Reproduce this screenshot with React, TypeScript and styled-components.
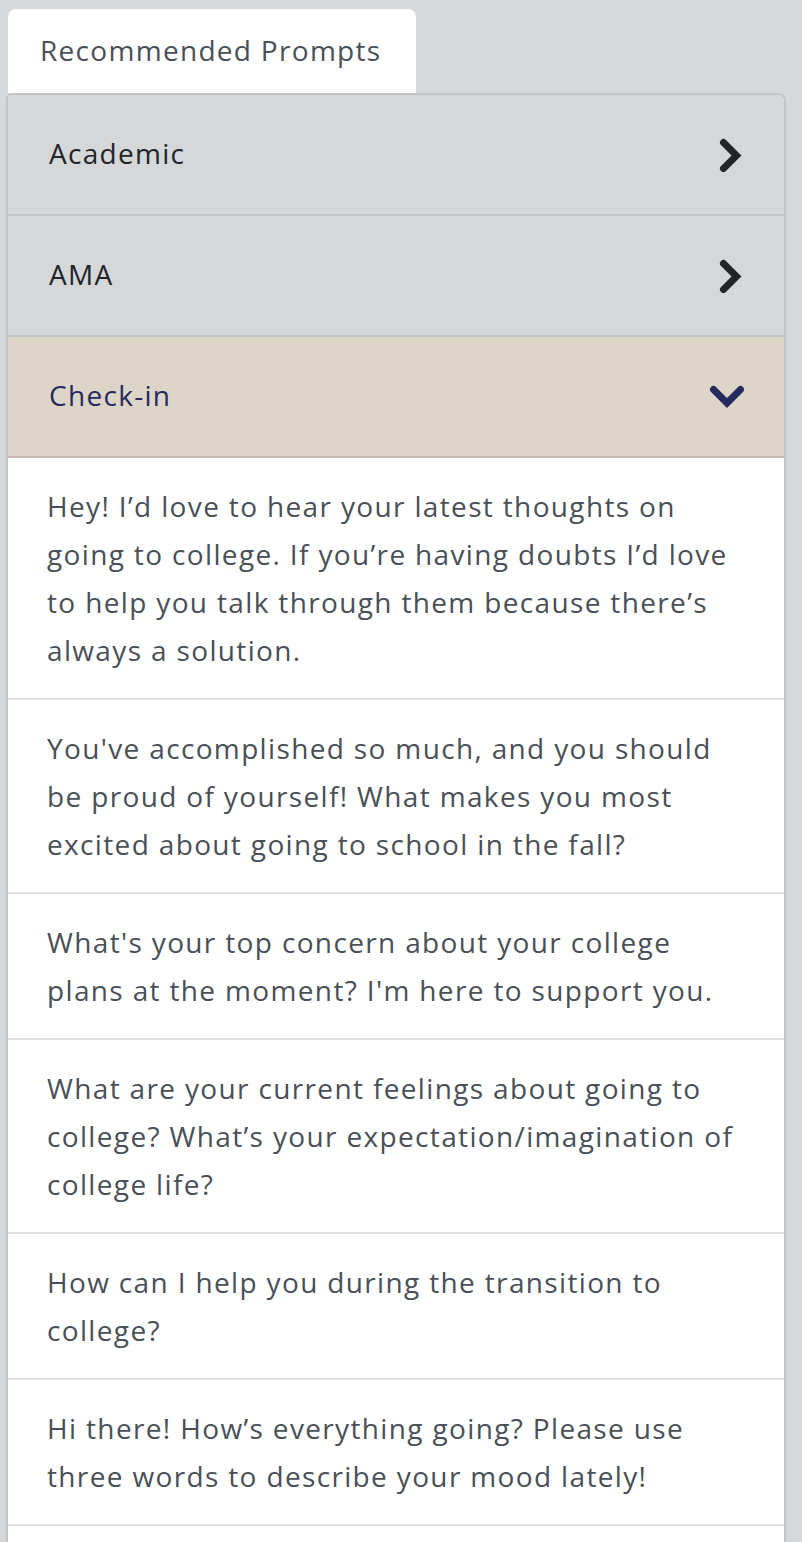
import styled, { createGlobalStyle } from "styled-components";

type SectionType = {
  title: string;
  open?: boolean;
  prompts?: string[];
};

const sections: SectionType[] = [
  { title: "Academic" },
  { title: "AMA" },
  {
    title: "Check-in",
    open: true,
    prompts: [
      "Hey! I’d love to hear your latest thoughts on going to college. If you’re having doubts I’d love to help you talk through them because there’s always a solution.",
      "You've accomplished so much, and you should be proud of yourself! What makes you most excited about going to school in the fall?",
      "What's your top concern about your college plans at the moment? I'm here to support you.",
      "What are your current feelings about going to college? What’s your expectation/imagination of college life?",
      "How can I help you during the transition to college?",
      "Hi there! How’s everything going? Please use three words to describe your mood lately!",
      "",
    ],
  },
];

const GlobalStyle = createGlobalStyle`
  html, body {
    margin: 0;
    padding: 0;
    background: #d7d8da;
    font-family: "Open Sans", Lato, sans-serif;
  }
`;

const ChevronRight = () => (
  <ChevronSvg width="24" height="34" viewBox="0 0 24 34">
    <polyline
      points="4.5,4.5 17.5,17.5 4.5,30.5"
      fill="none"
      stroke="#212529"
      strokeWidth="7"
      strokeLinecap="round"
      strokeLinejoin="miter"
    />
  </ChevronSvg>
);

const ChevronDown = () => (
  <svg width="36" height="24" viewBox="0 0 36 24">
    <polyline
      points="4.5,4.5 18,18 31.5,4.5"
      fill="none"
      stroke="#272a5e"
      strokeWidth="7"
      strokeLinecap="round"
      strokeLinejoin="miter"
    />
  </svg>
);

const App = () => {
  return (
    <>
      <GlobalStyle />
      <Page>
        <Tab>Recommended Prompts</Tab>
        <Accordion>
          {sections.map((section) => (
            <Section key={section.title}>
              <Header open={section.open}>
                <HeaderTitle open={section.open}>{section.title}</HeaderTitle>
                <IconBox>{section.open ? <ChevronDown /> : <ChevronRight />}</IconBox>
              </Header>
              {section.open &&
                section.prompts?.map((prompt, i) => (
                  <Prompt key={i}>{prompt}</Prompt>
                ))}
            </Section>
          ))}
        </Accordion>
      </Page>
    </>
  );
};

const Page = styled.div`
  padding: 9px 16px 0 6px;
  height: 1542px;
  box-sizing: border-box;
  overflow: hidden;
`;

const Tab = styled.div`
  margin-left: 2px;
  width: 408px;
  height: 84px;
  box-sizing: border-box;
  padding: 0 32px 2px;
  display: flex;
  align-items: center;
  background: #ffffff;
  border-radius: 8px 8px 0 0;
  font-size: 28px;
  letter-spacing: 1.3px;
  color: #495057;
  white-space: nowrap;
`;

const Accordion = styled.div`
  width: 780px;
  box-sizing: border-box;
  border: 2px solid #c3c4c6;
  border-bottom: none;
  border-radius: 6px 8px 0 0;
  overflow: hidden;
  background: #ffffff;
`;

const Section = styled.div`
  display: flex;
  flex-direction: column;
`;

const Header = styled.div<{ open?: boolean }>`
  height: 121px;
  box-sizing: border-box;
  padding: 0 39px 0 41px;
  display: flex;
  align-items: center;
  justify-content: space-between;
  background: ${({ open }) => (open ? "#ddd5c7" : "#d6d7d9")};
  border-bottom: 2px solid ${({ open }) => (open ? "#c6bcad" : "#c3c4c6")};
`;

const HeaderTitle = styled.span<{ open?: boolean }>`
  font-size: 28px;
  letter-spacing: 1.3px;
  margin-top: -3px;
  color: ${({ open }) => (open ? "#272a5e" : "#212529")};
`;

const IconBox = styled.span`
  width: 36px;
  display: flex;
  justify-content: flex-end;
`;

const ChevronSvg = styled.svg`
  margin-right: 2px;
`;

const Prompt = styled.div`
  padding: 24px 40px 24px 39px;
  min-height: 96px;
  font-size: 28px;
  line-height: 48px;
  letter-spacing: 1.35px;
  color: #495057;
  border-bottom: 2px solid #dee0e3;
`;

export default App;
